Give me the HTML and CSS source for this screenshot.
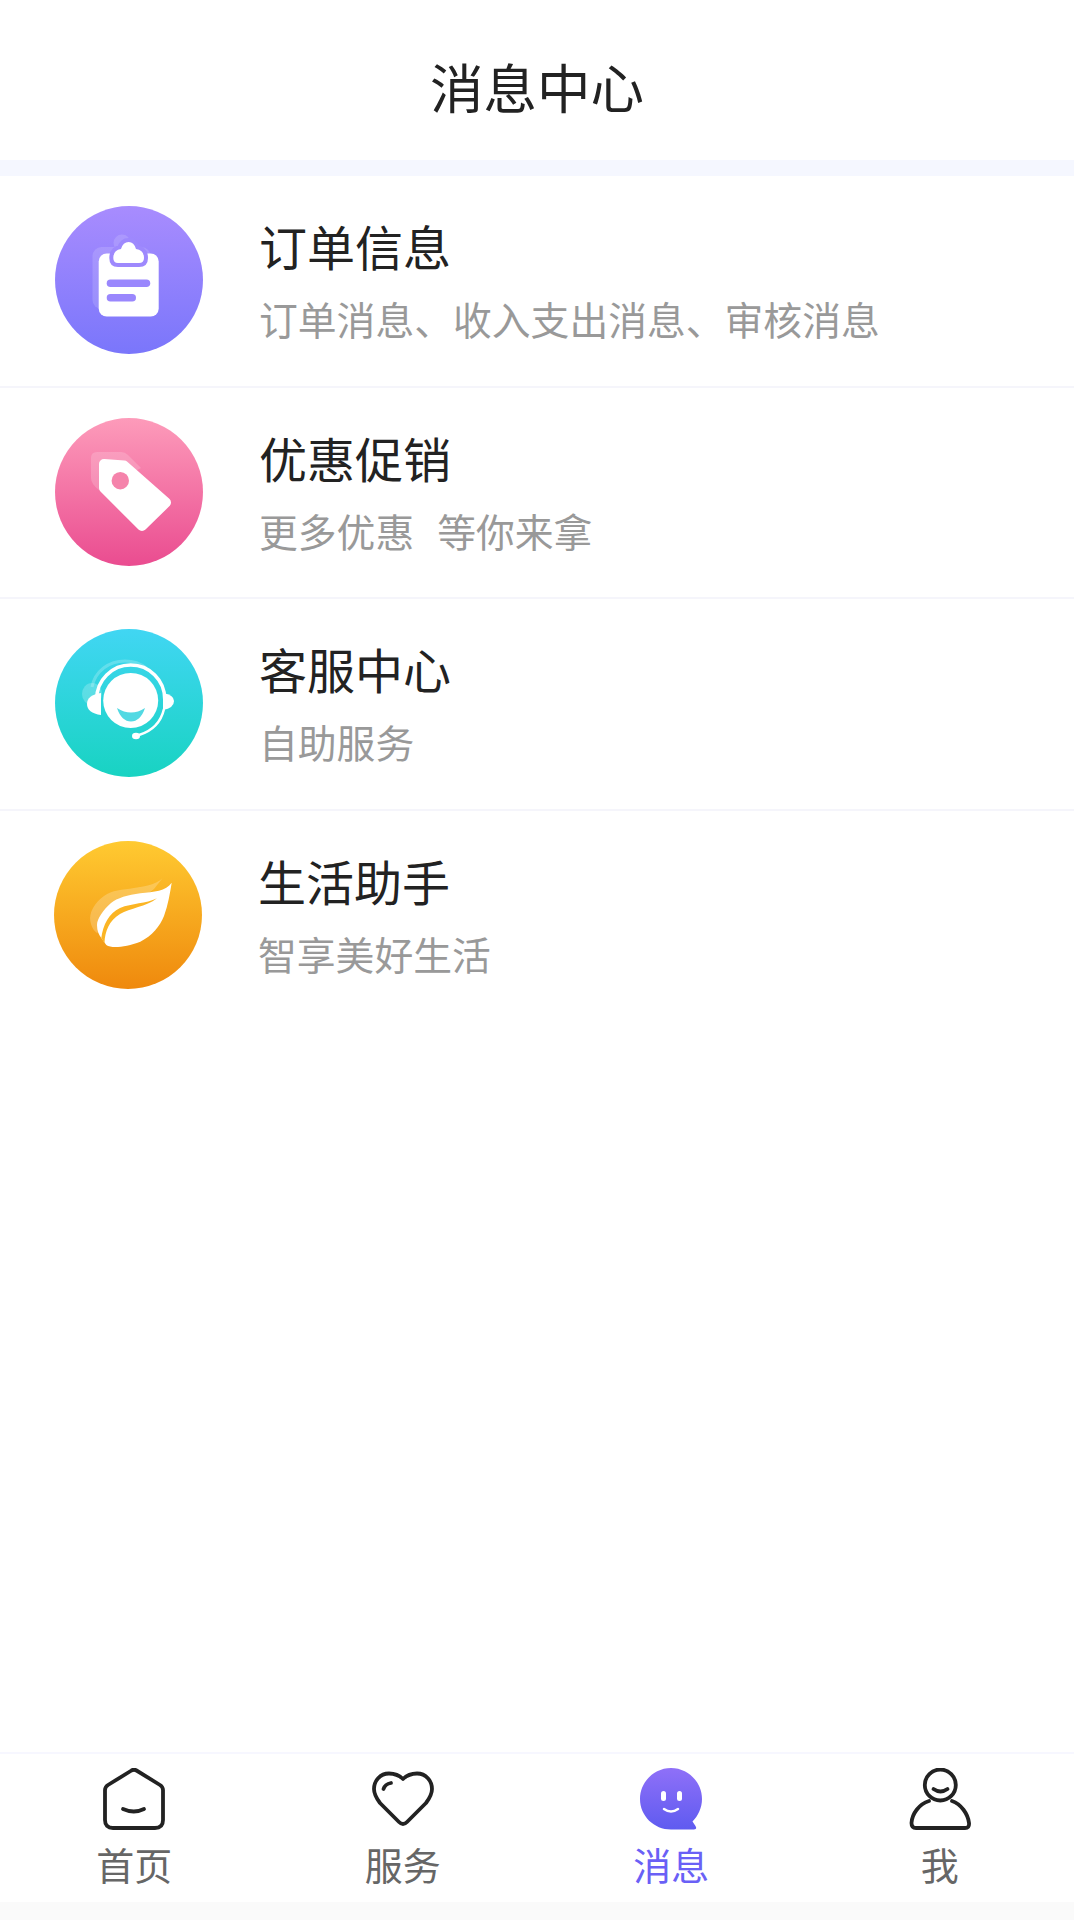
FILE: index.html
```html
<!DOCTYPE html>
<html lang="zh-CN">
  <head>
    <meta charset="UTF-8" />
    <meta name="viewport" content="width=device-width, initial-scale=1.0" />
    <title>消息中心</title>
    <link rel="stylesheet" href="styles.css">
  </head>

  <body>
    <div class="app">
      <h1 class="page-title">消息中心</h1>
      <div class="strip"></div>

      <ul class="msg-list">
        <li class="msg-row">
          <svg class="msg-icon" viewBox="0 0 148 148">
            <defs>
              <linearGradient id="gradPurple" x1="0" y1="0" x2="0" y2="1">
                <stop offset="0" stop-color="#a88cfe" />
                <stop offset="1" stop-color="#7a76fb" />
              </linearGradient>
            </defs>
            <circle cx="74" cy="74" r="74" fill="url(#gradPurple)" />
            <rect x="37.500" y="41" width="58" height="62" rx="9" fill="#fff" opacity=".14" />
            <circle cx="67" cy="37" r="8.500" fill="#fff" opacity=".14" />
            <rect x="43.700" y="47.500" width="60" height="63" rx="8" fill="#fff" />
            <path d="M63 57H84Q89 57 89 52Q89 44 81 43Q79 36 73.700 36Q68 36 66 43Q58.300 44 58.300 52Q58.300 57 63 57Z" fill="#fff" stroke="#9e89fd" stroke-width="8" paint-order="stroke" />
            <rect x="51.700" y="73.500" width="43.500" height="7.500" rx="3.750" fill="#9a87fd" />
            <rect x="51.700" y="88" width="29.300" height="7.500" rx="3.750" fill="#9a87fd" />
          </svg>
          <div class="msg-text">
            <div class="msg-title">订单信息</div>
            <div class="msg-desc">订单消息、收入支出消息、审核消息</div>
          </div>
        </li>

        <li class="msg-row">
          <svg class="msg-icon" viewBox="0 0 148 148">
            <defs>
              <linearGradient id="gradPink" x1="0" y1="0" x2="0" y2="1">
                <stop offset="0" stop-color="#fd9bba" />
                <stop offset="1" stop-color="#ea4c90" />
              </linearGradient>
            </defs>
            <circle cx="74" cy="74" r="74" fill="url(#gradPink)" />
            <path d="M42 34H66Q70 34 73 37L86 50L44 72Q36 66 36 60V40Q36 34 42 34Z" fill="#fff" opacity=".18" />
            <path d="M49 46L69 47.500L111 84.500L87 108L49 70Z" fill="#fff" stroke="#fff" stroke-width="10" stroke-linejoin="round" />
            <circle cx="65.300" cy="62.700" r="8.700" fill="#f583ab" />
          </svg>
          <div class="msg-text">
            <div class="msg-title">优惠促销</div>
            <div class="msg-desc">更多优惠<span class="desc-gap"></span>等你来拿</div>
          </div>
        </li>

        <li class="msg-row">
          <svg class="msg-icon" viewBox="0 0 148 148">
            <defs>
              <linearGradient id="gradTeal" x1="0" y1="0" x2="0" y2="1">
                <stop offset="0" stop-color="#41d6f3" />
                <stop offset="1" stop-color="#18d3c2" />
              </linearGradient>
            </defs>
            <circle cx="74" cy="74" r="74" fill="url(#gradTeal)" />
            <path d="M37 58C40 42 54 32 70 32C78 32 85 34 91 39" fill="none" stroke="#fff" stroke-width="3" opacity=".22" />
            <ellipse cx="37" cy="65" rx="10" ry="11" fill="#fff" opacity=".22" />
            <path d="M41.700 70A34 34 0 0 1 109.700 70" fill="none" stroke="#fff" stroke-width="3.500" />
            <circle cx="75.700" cy="71.500" r="27.500" fill="#fff" />
            <path d="M46 64V86Q32 84 32 75Q32 66 46 64Z" fill="#fff" />
            <path d="M108 64V81Q119 79 119 72Q119 66 108 64Z" fill="#fff" />
            <path d="M62 79Q76 88 90 79C87 88 82 92.500 76 92.500C70 92.500 65 88 62 79Z" fill="#52d9e3" />
            <path d="M109 80C106 93 97 102 84 106" fill="none" stroke="#fff" stroke-width="2.500" />
            <ellipse cx="81" cy="107" rx="4" ry="3.200" fill="#fff" />
          </svg>
          <div class="msg-text">
            <div class="msg-title">客服中心</div>
            <div class="msg-desc">自助服务</div>
          </div>
        </li>

        <li class="msg-row msg-row-last">
          <svg class="msg-icon" viewBox="0 0 148 148">
            <defs>
              <linearGradient id="gradOrange" x1="0" y1="0" x2="0" y2="1">
                <stop offset="0" stop-color="#ffca31" />
                <stop offset="1" stop-color="#ef890d" />
              </linearGradient>
            </defs>
            <circle cx="74" cy="74" r="74" fill="url(#gradOrange)" />
            <path d="M111 34C106 43 92 45 80 47C68 49 58 49 50 55C40 62 35 72 36.300 80C37 85 40 90 43 92L100 48Z" fill="#fff" opacity=".22" />
            <path d="M117.700 41.700C112 50 100 51 86.300 52.300C74 54 63 57 57 62C49 69 43 78 43 84C43 90 45 94 47.300 97L52.300 104C58 108 72 106 86.300 100.700C98 95 106 85 110 75C114 64 116 52 117.700 41.700Z" fill="#fff" />
            <path d="M103 57.300C92 63 78 62 66 67C55 72 49 84 47.300 97L50.500 102C51 90 55 80 66 73C76 67 92 66 103 57.300Z" fill="#fbb524" />
          </svg>
          <div class="msg-text">
            <div class="msg-title">生活助手</div>
            <div class="msg-desc">智享美好生活</div>
          </div>
        </li>
      </ul>

      <nav class="tabbar">
        <div class="tab">
          <svg class="tab-icon" viewBox="0 0 62 62">
            <path d="M28.500 2.500Q31 1 33.500 2.500L57 17Q60 19 60 22V52Q60 60 52 60H10Q2 60 2 52V22Q2 19 5 17Z" />
            <path d="M20 41Q31 46 41 41" />
          </svg>
          <span class="tab-label">首页</span>
        </div>
        <div class="tab">
          <svg class="tab-icon" viewBox="0 0 62 62">
            <path d="M31 11C27 7 22 5.500 17 5.500C8 5.500 2 13 2 21C2 27 5 31 8 35L27 54Q31 58 35 54L54 35C57 31 60 27 60 21C60 13 54 5.500 45 5.500C40 5.500 35 7 31 11Z" />
            <path d="M11.500 21Q13 16 19 15" />
          </svg>
          <span class="tab-label">服务</span>
        </div>
        <div class="tab tab-active">
          <svg class="tab-icon" viewBox="0 0 62 62">
            <defs>
              <linearGradient id="gradMsg" x1="0" y1="0" x2="0" y2="1">
                <stop offset="0" stop-color="#8f70f8" />
                <stop offset="1" stop-color="#5f5bf0" />
              </linearGradient>
            </defs>
            <path class="bubble" d="M31 0C14 0 0 14 0 31C0 48 14 61.500 31 61.500H54Q57.500 61.500 55.500 58L52.500 53.500C58 48 62 40 62 31C62 14 48 0 31 0Z" />
            <rect class="face" x="21" y="23" width="5" height="10" rx="2.500" />
            <rect class="face" x="37" y="23" width="5" height="10" rx="2.500" />
            <path class="smile" d="M24 41Q31 46 38 41" />
          </svg>
          <span class="tab-label">消息</span>
        </div>
        <div class="tab">
          <svg class="tab-icon" viewBox="0 0 62 62">
            <circle cx="31.300" cy="17" r="15.500" />
            <path d="M20 33C10 36 3 46 2.500 55Q2.500 60 7 60H56Q60.500 60 60 55C59 46 52 36 43 33" />
            <path d="M24.500 21Q31.500 26 38.500 21" />
          </svg>
          <span class="tab-label">我</span>
        </div>
      </nav>
      <div class="home-strip"></div>
    </div>
  </body>
</html>
```

FILE: styles.css
```css
* {
  box-sizing: border-box;
}

body {
  font-family: "Noto Sans CJK SC", "Noto Sans", sans-serif;
  margin: 0;
  background-color: #fff;
  color: #222;
}

.app {
  width: 1074px;
  height: 1920px;
  display: flex;
  flex-direction: column;
}

.page-title {
  height: 160px;
  margin: 0;
  font-size: 53.500px;
  font-weight: 400;
  line-height: 172px;
  text-align: center;
}

.strip {
  height: 16px;
  background-color: #f5f7ff;
}

.msg-list {
  flex: 1;
  list-style: none;
  margin: 0;
  padding: 0;
}

.msg-row {
  height: 211.700px;
  padding: 30px 0 0 55px;
  display: flex;
  gap: 56px;
  border-bottom: 2px solid #f5f5fb;
}

.msg-row-last {
  padding-left: 54px;
  border-bottom: 0;
}

.msg-icon {
  width: 148px;
  height: 148px;
  flex: none;
}

.msg-title {
  margin-top: 9px;
  font-size: 48px;
  line-height: 60px;
}

.msg-desc {
  margin-top: 18px;
  font-size: 38.800px;
  line-height: 50px;
  color: #999;
}

.desc-gap {
  display: inline-block;
  width: 23px;
}

.tabbar {
  height: 150px;
  padding-top: 14px;
  display: flex;
  border-top: 2px solid #f7f7ff;
}

.tab {
  flex: 1;
  display: flex;
  flex-direction: column;
  align-items: center;
}

.tab-icon {
  width: 62px;
  height: 62px;
  fill: none;
  stroke: #222;
  stroke-width: 3.800;
  stroke-linecap: round;
  stroke-linejoin: round;
}

.tab-label {
  margin-top: 8px;
  font-size: 38px;
  line-height: 52px;
  color: #666;
}

.tab-active .tab-label {
  color: #6a60f6;
}

.bubble {
  fill: url(#gradMsg);
  stroke: none;
}

.face {
  fill: #fff;
  stroke: none;
}

.smile {
  stroke: #fff;
  stroke-width: 2.500;
}

.home-strip {
  height: 18px;
  background-color: #fafafa;
}
```
